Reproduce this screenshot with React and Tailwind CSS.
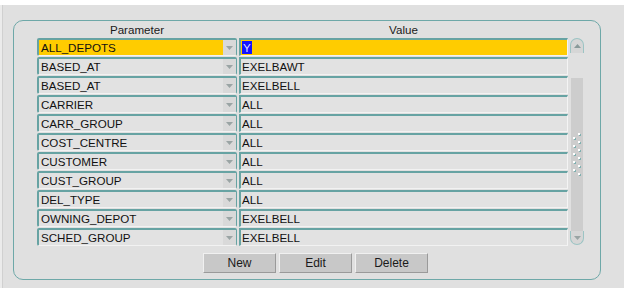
const rows = [
  { param: "ALL_DEPOTS", value: "Y", active: true },
  { param: "BASED_AT", value: "EXELBAWT" },
  { param: "BASED_AT", value: "EXELBELL" },
  { param: "CARRIER", value: "ALL" },
  { param: "CARR_GROUP", value: "ALL" },
  { param: "COST_CENTRE", value: "ALL" },
  { param: "CUSTOMER", value: "ALL" },
  { param: "CUST_GROUP", value: "ALL" },
  { param: "DEL_TYPE", value: "ALL" },
  { param: "OWNING_DEPOT", value: "EXELBELL" },
  { param: "SCHED_GROUP", value: "EXELBELL" },
];

function Arrow({ up }) {
  return (
    <svg width="7" height="4" viewBox="0 0 7 4">
      {up ? <path d="M0 4 L3.5 0 L7 4 Z" fill="#8a9a9a" /> : <path d="M0 0 L7 0 L3.5 4 Z" fill="#9aa4a4" />}
    </svg>
  );
}

function Grip() {
  const dots = [
    [5, 0], [0, 4], [5, 8], [0, 12], [5, 16], [0, 20], [5, 24], [0, 28], [5, 32], [0, 36], [5, 40],
  ];
  return (
    <svg width="8" height="43" viewBox="0 0 8 43">
      {dots.map(([x, y], i) => (
        <g key={i}>
          <rect x={x + 1} y={y + 1} width="2" height="2" fill="#7fb0b0" />
          <rect x={x} y={y} width="2" height="2" fill="#ffffff" />
        </g>
      ))}
    </svg>
  );
}

function Row({ param, value, active }) {
  const bg = active ? "bg-[#ffcc00]" : "bg-[#e2e2e2]";
  return (
    <div className="flex h-[18px] gap-[2px]">
      <div className={`flex w-[200px] border-t-2 border-l-2 border-r border-b border-t-[#67a3a3] border-l-[#67a3a3] border-r-[#67a3a3] border-b-[#f2f2f2] rounded-[2px] ${bg}`}>
        <div className="flex-1 pl-[2px] leading-[15px] text-[11.6px] text-[#111]">{param}</div>
        <div className="w-[13px] bg-[#d9d9d9] flex items-center justify-center">
          <Arrow />
        </div>
      </div>
      <div className={`flex w-[329px] border-t-2 border-l-2 border-r border-b border-t-[#67a3a3] border-l-[#67a3a3] border-r-[#f4f4f4] border-b-[#f2f2f2] ${bg}`}>
        <div className="pl-[1px] leading-[15px] text-[11.6px] text-[#111]">
          {active ? <span className="bg-[#1414ff] text-[#dcdcff] px-[1px]">{value}</span> : value}
        </div>
      </div>
    </div>
  );
}

function Button({ children }) {
  return (
    <div className="w-[73px] h-[20px] flex items-center justify-center bg-[#c8c8c8] border border-t-[#f0f0f0] border-l-[#f0f0f0] border-r-[#9a9a9a] border-b-[#9a9a9a] text-[12px] text-[#1a1a1a]">
      {children}
    </div>
  );
}

export default function App() {
  return (
    <div className="w-[624px] h-[288px] bg-[#e0e0e0] flex flex-col font-['Liberation_Sans',Arial,sans-serif]">
      <div className="h-[5px] bg-white" />
      <div className="flex flex-1">
        <div className="w-[3px] bg-[#ebebeb] border-r border-[#d0d0d0]" />
        <div className="pl-[10px] pt-[15px]">
          <div className="w-[588px] h-[260px] border border-[#6ea8a8] rounded-[10px] pl-[23px] pt-px">
            <div className="flex h-[16px] text-[11.6px] text-[#1a1a1a] leading-[16px]">
              <div className="w-[200px] text-center">Parameter</div>
              <div className="w-[2px]" />
              <div className="w-[329px] text-center">Value</div>
            </div>
            <div className="flex gap-[2px]">
              <div className="flex flex-col gap-[1px]">
                {rows.map((r, i) => (
                  <Row key={i} {...r} />
                ))}
              </div>
              <div className="w-[14px] flex flex-col h-[207px]">
                <div className="h-[15px] rounded-t-[7px] border border-b-0 border-[#9cc4c4] bg-[#d6d6d6] flex items-center justify-center">
                  <Arrow up />
                </div>
                <div className="h-[25px]" />
                <div className="flex-1 mx-[1px] bg-[#cdcdcd] flex items-center justify-center">
                  <Grip />
                </div>
                <div className="h-[14px] rounded-b-[7px] border border-t-0 border-[#9cc4c4] bg-[#d6d6d6] flex items-center justify-center">
                  <Arrow />
                </div>
              </div>
            </div>
            <div className="flex gap-[3px] ml-[166px] mt-[7px]">
              <Button>New</Button>
              <Button>Edit</Button>
              <Button>Delete</Button>
            </div>
          </div>
        </div>
      </div>
    </div>
  );
}
